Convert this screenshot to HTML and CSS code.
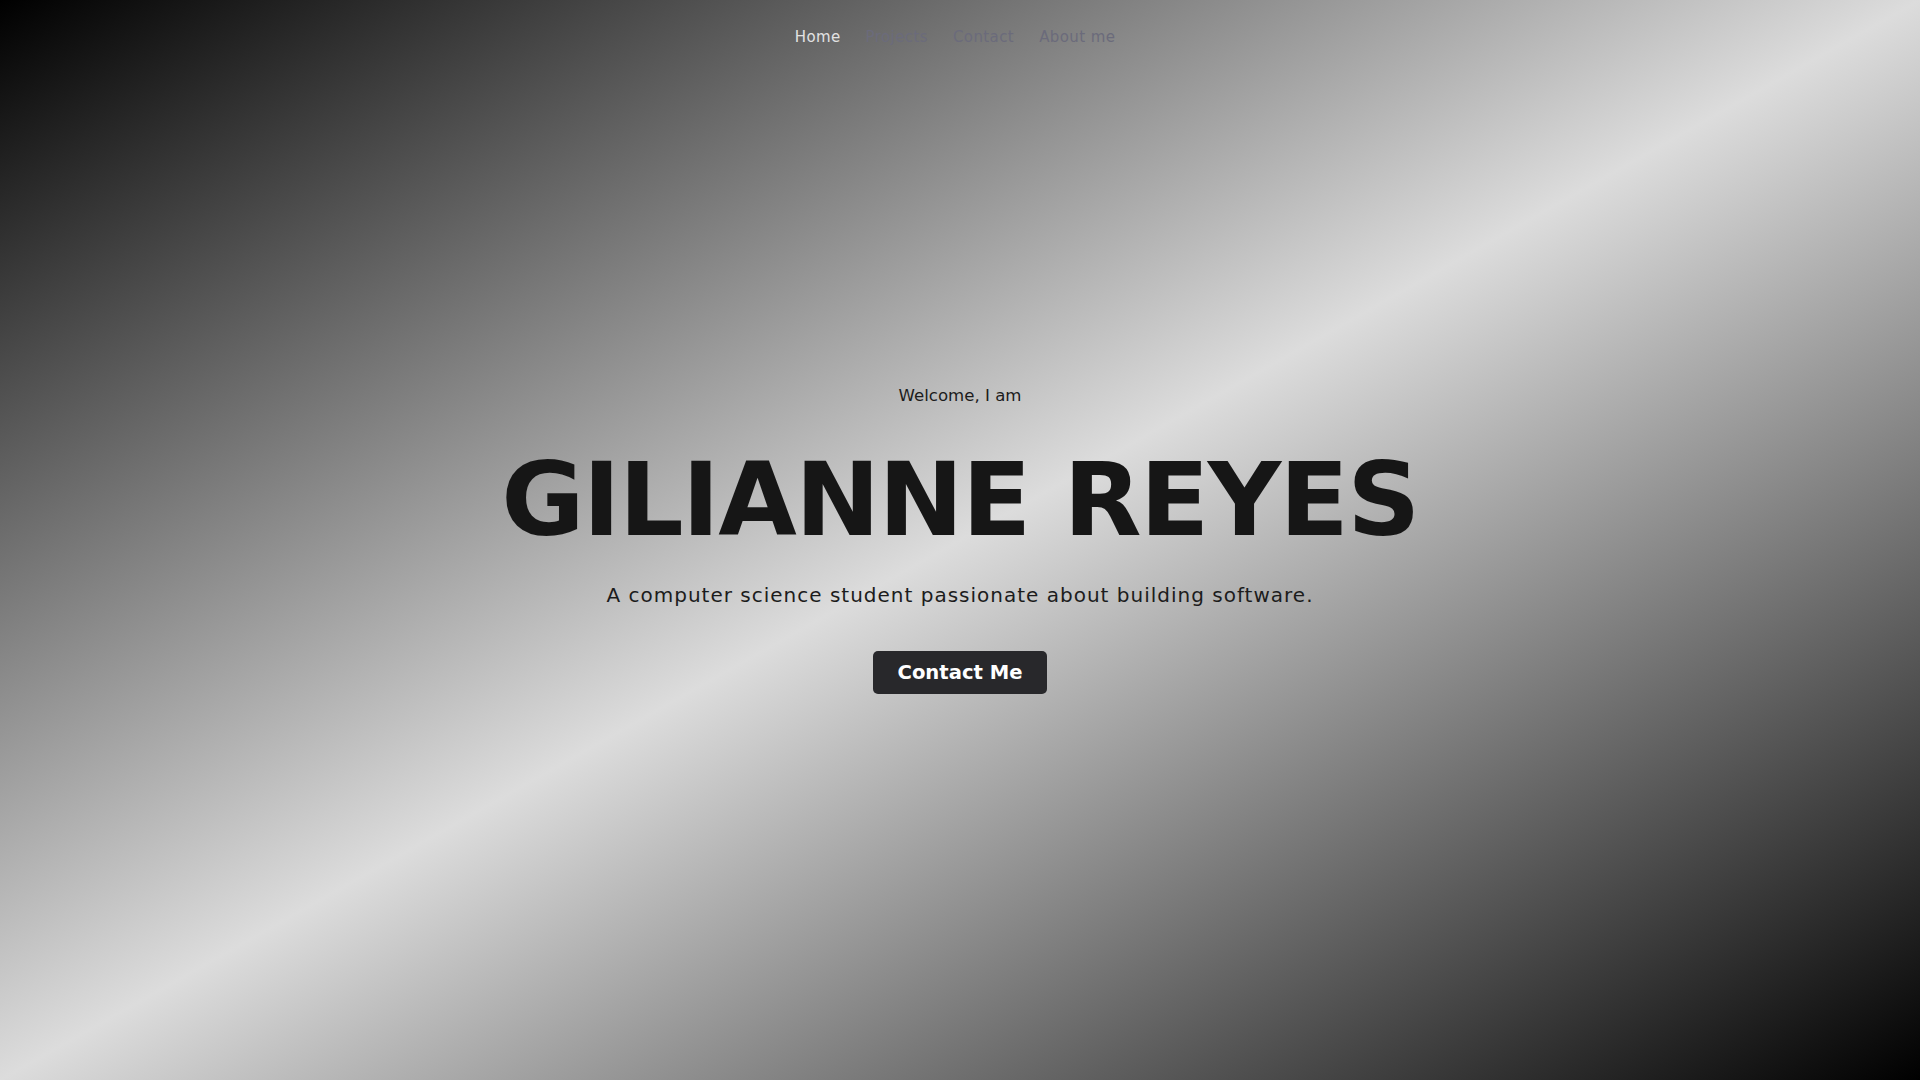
FILE: index.html
```html
<!DOCTYPE html>
<html lang="en">
<head>
<meta charset="utf-8">
<title>Gilianne Reyes</title>
<link rel="stylesheet" href="styles.css">
</head>
<body>
<header class="site-header">
  <nav class="nav">
    <a class="nav-link active" href="#">Home</a>
    <a class="nav-link" href="#">Projects</a>
    <a class="nav-link" href="#">Contact</a>
    <a class="nav-link" href="#">About me</a>
  </nav>
</header>
<main>
  <section class="hero">
    <p class="welcome">Welcome, I am</p>
    <h1 class="name">GILIANNE REYES</h1>
    <p class="tagline">A computer science student passionate about building software.</p>
    <a class="btn" href="#">Contact Me</a>
  </section>
</main>
</body>
</html>
```
FILE: styles.css
```css
html, body {
  margin: 0;
  padding: 0;
}
body {
  font-family: "DejaVu Sans", "Liberation Sans", sans-serif;
  background: #ffffff;
  color: #1a1a1a;
}
::-webkit-scrollbar {
  width: 10px;
  height: 10px;
}
::-webkit-scrollbar-track {
  background: #ffffff;
}
::-webkit-scrollbar-thumb {
  background: #111111;
  border: 2px solid #ffffff;
  border-radius: 5px;
}
::-webkit-scrollbar-corner {
  background: #ffffff;
}
.site-header {
  position: absolute;
  top: 0;
  left: 0;
  right: 0;
  z-index: 2;
}
.nav {
  display: flex;
  justify-content: center;
  gap: 25px;
  padding: 28px 10px 0 0;
}
.nav-link {
  font-size: 15px;
  line-height: 18px;
  letter-spacing: 0.4px;
  color: #6b6b7b;
  text-decoration: none;
}
.nav-link.active {
  color: #e2e2e2;
}
.hero {
  width: 100vw;
  height: 100vh;
  display: flex;
  flex-direction: column;
  align-items: center;
  justify-content: center;
  background: linear-gradient(to bottom right, #000000, #dcdcdc, #000000);
  text-align: center;
}
.welcome {
  margin: 0 0 44px;
  font-size: 16.6px;
  line-height: 20px;
  color: #1c1c1c;
}
.name {
  margin: 0 0 32px;
  font-size: 101.5px;
  line-height: 101.5px;
  font-weight: 700;
  letter-spacing: -1.6px;
  color: #161616;
  white-space: nowrap;
}
.tagline {
  margin: 0 0 44px;
  font-size: 20px;
  line-height: 24px;
  letter-spacing: 1px;
  color: #1c1c1c;
}
.btn {
  display: inline-block;
  padding: 10px 25px;
  font-size: 19.6px;
  line-height: 23px;
  font-weight: 700;
  color: #ffffff;
  background: #28282b;
  border-radius: 5px;
  text-decoration: none;
}
```
